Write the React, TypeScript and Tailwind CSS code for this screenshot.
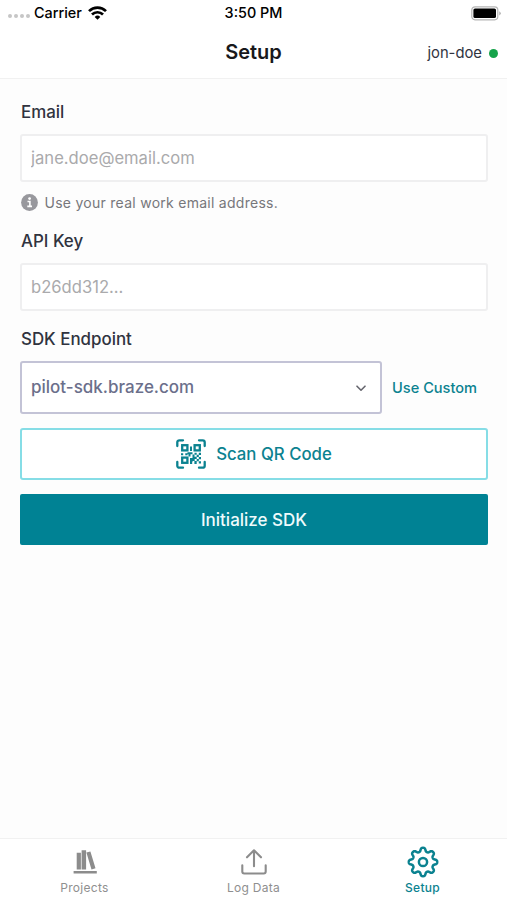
import React, { FC, ReactNode } from "react";

const TEETH = 8;

// Rounded cog outline, built around the centre of a 32x32 box
const cogPath = (() => {
  const points: string[] = [];
  for (let i = 0; i < 240; i++) {
    const angle = (i / 240) * Math.PI * 2;
    const wave = Math.tanh(1.6 * Math.cos(TEETH * angle)) / Math.tanh(1.6);
    const radius = 12.4 + 1.8 * wave;
    points.push(
      `${(16 + radius * Math.cos(angle)).toFixed(2)} ${(16 + radius * Math.sin(angle)).toFixed(2)}`
    );
  }
  return `M${points.join("L")}Z`;
})();

const WifiIcon: FC = () => (
  <svg width="19" height="14" viewBox="0 0 19 14" fill="none" stroke="#000" strokeWidth="2.7">
    <path d="M1 5.1a12.2 12.2 0 0 1 17 0" />
    <path d="M4 8.5a7.8 7.8 0 0 1 11 0" />
    <path d="M9.5 13.7 6.7 10.9a4 4 0 0 1 5.6 0Z" fill="#000" stroke="none" />
  </svg>
);

const BatteryIcon: FC = () => (
  <svg width="30" height="15" viewBox="0 0 30 15">
    <rect x="0.8" y="0.8" width="26" height="13" rx="3.2" fill="#fff" stroke="#b5b5b5" strokeWidth="1.2" />
    <rect x="2.4" y="2.5" width="22.6" height="9.6" rx="1.6" fill="#000" />
    <path d="M28.3 5.2q1.4.8 1.4 2.1t-1.4 2.1z" fill="#aaa" />
  </svg>
);

const InfoIcon: FC = () => (
  <svg width="17" height="17" viewBox="0 0 17 17">
    <circle cx="8.5" cy="8.5" r="8.4" fill="#98989d" />
    <circle cx="8.6" cy="4.6" r="1.4" fill="#fff" />
    <path d="M6.5 7.5h2.4v4.7M6.3 12.4h4.7" fill="none" stroke="#fff" strokeWidth="1.6" />
  </svg>
);

const QrIcon: FC = () => (
  <svg width="30" height="30" viewBox="0 0 30 30" fill="none" stroke="#0b8290" strokeWidth="2.3">
    <path d="M1.3 7V3.3a2 2 0 0 1 2-2H7M23 1.3h3.7a2 2 0 0 1 2 2V7M28.7 23v3.7a2 2 0 0 1-2 2H23M7 28.7H3.3a2 2 0 0 1-2-2V23" strokeLinecap="round" />
    <rect x="6.2" y="6.2" width="5.2" height="5.2" />
    <rect x="18.6" y="6.2" width="5.2" height="5.2" />
    <rect x="6.2" y="18.6" width="5.2" height="5.2" />
    <g fill="#0b8290" stroke="none">
      <path d="M14 7.5h2V12h-2zM5 14.2h2.2v2H5zM9.3 14.2h2.2v2H9.3zM11.5 13.2h5v2h-2v2.4h-2v-2.4h-1zM18.5 13.7h2.2v2.1h-2.2zM22.8 13.7H25V16h-2.2z" />
      <path d="M16.5 15.6h2v2.2h-2zM20.7 15.8h2.1v2.2h-2.1zM14 19h2.5v-1.2h4.2V20h-2v2h-2.2v1H14zM22.8 18H25v2.2h-2.2zM20.7 20.1h2.1v2.2h-2.1zM14 23h2.2v2H14zM18.4 22h2.3v3h-2.3zM22.8 22.3H25v2.2h-2.2z" />
    </g>
  </svg>
);

const ChevronIcon: FC = () => (
  <svg width="10" height="7" viewBox="0 0 10 7" fill="none" stroke="#66666e" strokeWidth="1.6">
    <path d="M1 1.2 5 5.2 9 1.2" strokeLinecap="round" strokeLinejoin="round" />
  </svg>
);

const BooksIcon: FC = () => (
  <svg width="32" height="32" viewBox="0 0 32 32" fill="#8c8c8c">
    <path d="M7.7 6.7h4.2V23.4H7.7zM12.6 4.3h4.5V23.4h-4.5zM17.4 6.5l4-1.1L26.5 22.2l-4 1.2zM4.6 25h23.2v2.6H4.6z" />
  </svg>
);

const UploadIcon: FC = () => (
  <svg
    width="32"
    height="32"
    viewBox="0 0 32 32"
    fill="none"
    stroke="#8c8c8c"
    strokeWidth="2.1"
    strokeLinecap="round"
    strokeLinejoin="round"
  >
    <path d="M16 20.3V4.5M9 11.3l7-7 7 7" />
    <path d="M4.3 19.3v6.2a2 2 0 0 0 2 2h19.4a2 2 0 0 0 2-2v-6.2" />
  </svg>
);

const CogIcon: FC = () => (
  <svg width="32" height="32" viewBox="0 0 32 32" fill="none" stroke="#0b8290" strokeWidth="2.5">
    <path d={cogPath} strokeLinejoin="round" />
    <circle cx="16" cy="16" r="4.1" />
  </svg>
);

const StatusBar: FC = () => (
  <div className="grid h-[26px] grid-cols-3 items-center text-[14.4px] font-medium text-black">
    <div className="flex items-center pl-2">
      <div className="mt-[7px] flex gap-[2px]">
        {[0, 1, 2, 3].map((dot) => (
          <span key={dot} className="size-[4px] rounded-full bg-[#c6c6c6]" />
        ))}
      </div>
      <span className="ml-1">Carrier</span>
      <span className="ml-[6px]">
        <WifiIcon />
      </span>
    </div>
    <div className="text-center">3:50 PM</div>
    <div className="flex justify-end pr-[6px]">
      <BatteryIcon />
    </div>
  </div>
);

const Header: FC = () => (
  <header className="grid h-[53px] grid-cols-3 items-center border-b border-[#f1f1f1] bg-white">
    <h1 className="col-start-2 text-center text-[20px] font-semibold text-[#18181b]">Setup</h1>
    <div className="flex items-center justify-end gap-[7px] pr-[9px] text-[14.8px] text-[#30333f]">
      <span className="pt-[2px]">jon-doe</span>
      <span className="mt-[2px] size-[9px] rounded-full bg-[#16a34a]" />
    </div>
  </header>
);

interface FieldProps {
  label: string;
  placeholder: string;
}

const Field: FC<FieldProps> = ({ label, placeholder }) => (
  <label className="block">
    <span className="block pl-px text-[16.9px] leading-6 font-medium text-[#30333f]">{label}</span>
    <input
      type="text"
      placeholder={placeholder}
      className="mt-[10px] block h-12 w-full rounded-[3px] border-2 border-[#efeff0] bg-white px-[9px] text-[16.6px] text-gray-700 placeholder:text-[#aaaaac] focus:outline-none"
    />
  </label>
);

interface TabProps {
  label: string;
  icon: ReactNode;
  active?: boolean;
}

const Tab: FC<TabProps> = ({ label, icon, active }) => (
  <button
    className={`flex flex-1 flex-col items-center pt-[7px] text-[12px] leading-4 tracking-[0.3px] ${
      active ? "font-medium text-[#0b8290]" : "text-[#8f8f8f]"
    }`}
  >
    {icon}
    <span className="mt-[2px]">{label}</span>
  </button>
);

const App: FC = () => {
  return (
    <div className="flex h-[900px] w-[507px] flex-col bg-[#fdfdfd] font-['Inter','Liberation_Sans',sans-serif]">
      <div className="bg-white">
        <StatusBar />
        <Header />
      </div>

      <main className="flex-1 pt-[21px] pr-[19px] pl-5">
        <Field label="Email" placeholder="jane.doe@email.com" />
        <div className="mt-[10px] flex h-[21px] items-center gap-[7px] pl-[0.5px] text-[14px] tracking-[0.27px] text-[#77777b]">
          <InfoIcon />
          Use your real work email address.
        </div>
        <div className="pt-4">
          <Field label="API Key" placeholder="b26dd312..." />
        </div>

        <div className="mt-4 pl-px text-[16.9px] leading-6 font-medium text-[#30333f]">SDK Endpoint</div>
        <div className="mt-[10px] flex items-center gap-[10px]">
          <button className="flex h-[53px] w-[362px] items-center justify-between rounded-[3px] border-2 border-[#c3c3d6] bg-white pt-px pr-[14px] pl-[9px] text-[17px] font-medium text-[#6b6f8b]">
            pilot-sdk.braze.com
            <ChevronIcon />
          </button>
          <button className="pt-[2px] text-[14.6px] font-medium text-[#0b8290]">Use Custom</button>
        </div>

        <button className="mt-[14px] flex h-[52px] w-full items-center justify-center gap-[10px] rounded-[3px] border-2 border-[#86dde6] bg-white text-[16.8px] font-medium text-[#0b8290]">
          <QrIcon />
          <span className="pt-[2px]">Scan QR Code</span>
        </button>
        <button className="mt-[14px] h-[51px] w-full rounded-[2px] bg-[#008294] pt-[2px] text-[17px] font-medium text-[#effbfc]">
          Initialize SDK
        </button>
      </main>

      <nav className="flex h-[62px] border-t border-[#f1f1f1] bg-white">
        <Tab label="Projects" icon={<BooksIcon />} />
        <Tab label="Log Data" icon={<UploadIcon />} />
        <Tab label="Setup" icon={<CogIcon />} active />
      </nav>
    </div>
  );
};

export default App;
